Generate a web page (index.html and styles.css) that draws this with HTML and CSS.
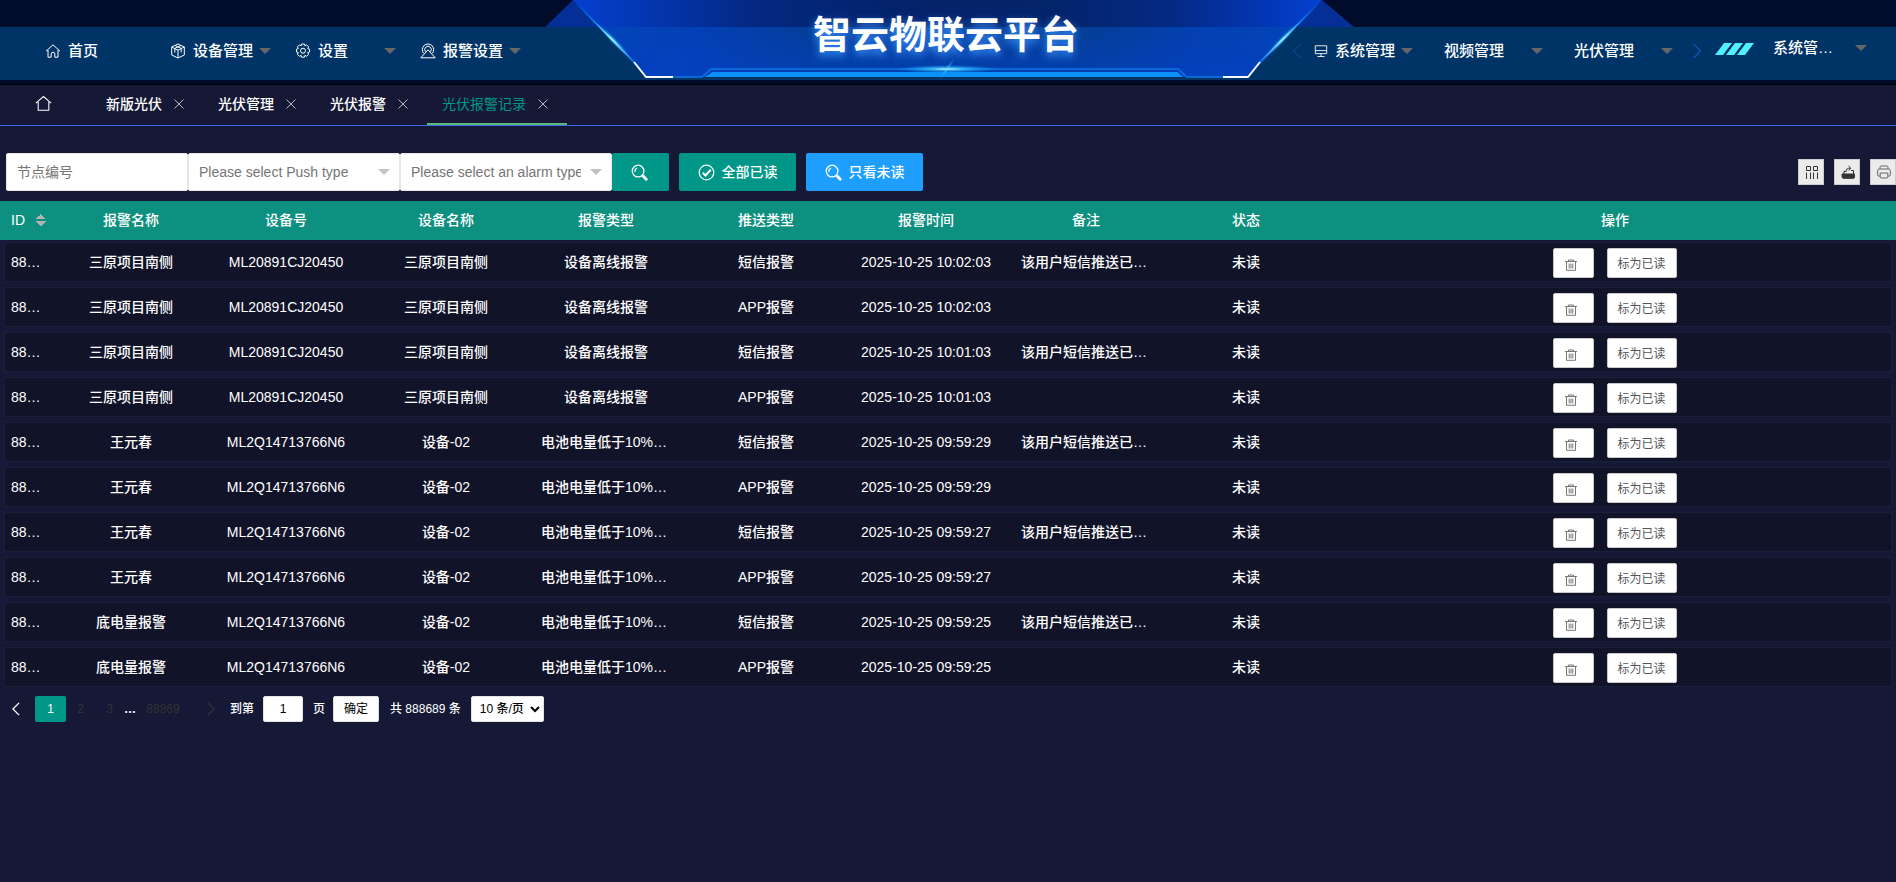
FILE: index.html
```html
<!DOCTYPE html>
<html lang="zh-CN">
<head>
<meta charset="utf-8">
<title>智云物联云平台</title>
<link rel="stylesheet" href="styles.css">
</head>
<body>
<svg class="sprite" aria-hidden="true">
  <symbol id="i-home" viewBox="0 0 16 16"><path d="M1 8.2 8 1.8l7 6.4M3 7v7.2h3.2V11a1.8 1.8 0 0 1 3.6 0v3.2H13V7"/></symbol>
  <symbol id="i-house" viewBox="0 0 16 16"><path d="M.8 7.6 8 1.4l7.2 6.2M3 6.500V14.400h10V6.500"/></symbol>
  <symbol id="i-cube" viewBox="0 0 16 16"><path d="M8 1 14.300 4v8L8 15 1.700 12V4zM1.700 4 8 7.200 14.300 4M8 7.200V15M4.500 5.500 11 2.500M5 2.500 11.500 5.500M4.800 6v3.500M11.200 6v3.500"/></symbol>
  <symbol id="i-gear" viewBox="0 0 16 16"><path d="M6.600 1h2.800l.5 1.800 1.700-.9 2 2-.9 1.700 1.800.6v2.800l-1.800.6.9 1.700-2 2-1.700-.9-.5 1.800H6.600l-.5-1.800-1.700.9-2-2 .9-1.700L1.500 9V6.200l1.800-.6-.9-1.700 2-2 1.700.9z"/><circle cx="8" cy="7.700" r="2.500"/></symbol>
  <symbol id="i-alarm" viewBox="0 0 16 16"><path d="M3.600 10.300A5.700 5.700 0 1 1 12.400 10.300M5.400 8.600A3.300 3.300 0 1 1 10.600 8.600M8 6.800.8 14.800h14.400zM5 11.200"/></symbol>
  <symbol id="i-screen" viewBox="0 0 16 16"><path d="M1.500 2h13v9h-13zM1.500 7.500h13M8 11v3M4 14.300h8"/></symbol>
  <symbol id="i-close" viewBox="0 0 16 16"><path d="m3.500 3.500 9 9m0-9-9 9"/></symbol>
  <symbol id="i-search" viewBox="0 0 18 18"><circle cx="7.500" cy="7.500" r="6.200"/><path d="M4.300 8.600A3.500 3.500 0 0 1 6.600 4.200"/><path d="m12.800 12.800 3.300 3.300" stroke-width="3" stroke-linecap="round"/></symbol>
  <symbol id="i-check" viewBox="0 0 18 18"><circle cx="9" cy="9" r="7.700"/><path d="m5 9.200 2.900 2.900 5.600-5.900" stroke-width="2.300"/></symbol>
  <symbol id="i-trash" viewBox="0 0 14 14"><path d="M1 3.500h12M4.500 3v-1h5v1M2.500 3.500v8.800h9V3.500M5.200 5.500v5M7 5.500v5M8.800 5.500v5"/></symbol>
  <symbol id="i-cols" viewBox="0 0 14 14"><path d="M1.500 1.500h4v4h-4zM8.500 1.500h4v4h-4zM1.500 7.500V14M5.500 7.500V14M8.500 7.500V14M12.500 7.500V14"/></symbol>
  <symbol id="i-export" viewBox="0 0 14 14"><path d="M1 9h12.500v3.300a1 1 0 0 1-1 1H2.200a1 1 0 0 1-1-1z" fill="currentColor"/><path d="M3 9V6.500h2M5 7c0-3 1.500-3.800 4-3.800M7.500 1l2.400 2.200-2.400 2.300M12.500 9V5.500H10"/></symbol>
  <symbol id="i-print" viewBox="0 0 14 14"><path d="M3 4V2.200A1.200 1.200 0 0 1 4.200 1h5.600A1.200 1.200 0 0 1 11 2.200V4M3 11H1.500a.8.800 0 0 1-.8-.8V5.500A1.500 1.500 0 0 1 2.200 4h9.600a1.500 1.500 0 0 1 1.500 1.500v4.700a.8.800 0 0 1-.8.800H11M3.200 8h7.600v4a1 1 0 0 1-1 1H4.200a1 1 0 0 1-1-1z"/></symbol>
  <symbol id="i-left" viewBox="0 0 10 16"><path d="M8.500 1 1.500 8l7 7"/></symbol>
  <symbol id="i-right" viewBox="0 0 10 16"><path d="m1.500 1 7 7-7 7"/></symbol>
</svg>

<header class="header">
  <div class="bar">
    <nav class="nav nav-main">
      <a class="nav-item" href="#"><svg class="icon"><use href="#i-home"/></svg>首页</a>
      <a class="nav-item" href="#"><svg class="icon"><use href="#i-cube"/></svg>设备管理<span class="caret"></span></a>
      <a class="nav-item" href="#"><svg class="icon"><use href="#i-gear"/></svg>设置<span class="caret"></span></a>
      <a class="nav-item" href="#"><svg class="icon"><use href="#i-alarm"/></svg>报警设置<span class="caret"></span></a>
    </nav>
    <nav class="nav nav-side">
      <button class="scroll dim" aria-label="向左"><svg><use href="#i-left"/></svg></button>
      <a class="nav-item" href="#"><svg class="icon small"><use href="#i-screen"/></svg>系统管理<span class="caret"></span></a>
      <a class="nav-item" href="#">视频管理<span class="caret"></span></a>
      <a class="nav-item" href="#">光伏管理<span class="caret"></span></a>
      <button class="scroll" aria-label="向右"><svg><use href="#i-right"/></svg></button>
      <svg class="stripes" viewBox="0 0 40 12"><path d="M9 0h8L8 12H0zM20 0h8l-9 12h-8zM31 0h8l-9 12h-8z"/></svg>
      <a class="user" href="#">系统管…<span class="caret"></span></a>
    </nav>
  </div>
  <svg class="banner" viewBox="0 0 820 85" aria-hidden="true">
    <defs>
      <linearGradient id="g-top" x1="0" x2="1" y1="0" y2="0">
        <stop offset="0" stop-color="#0540d0"/><stop offset=".1" stop-color="#0336b0"/><stop offset=".25" stop-color="#042880"/><stop offset=".45" stop-color="#04226a"/><stop offset=".65" stop-color="#04246c"/><stop offset=".8" stop-color="#042a84"/><stop offset=".92" stop-color="#0336b4"/><stop offset="1" stop-color="#0540d0"/>
      </linearGradient>
      <linearGradient id="g-low" x1="0" x2="1" y1="0" y2="0">
        <stop offset="0" stop-color="#0344b8"/><stop offset=".15" stop-color="#0440b4"/><stop offset=".3" stop-color="#043e98"/><stop offset=".7" stop-color="#043e96"/><stop offset=".85" stop-color="#0440b0"/><stop offset="1" stop-color="#0344b8"/>
      </linearGradient>
      <linearGradient id="g-fade" x1="0" x2="0" y1="0" y2="1">
        <stop offset="0" stop-color="#0440c8" stop-opacity="0"/><stop offset="1" stop-color="#0440c8" stop-opacity=".5"/>
      </linearGradient>
      <linearGradient id="g-edge" x1="0" x2="0" y1="0" y2="1">
        <stop offset="0" stop-color="#0a60e8" stop-opacity="0"/><stop offset=".35" stop-color="#0a8cf4"/><stop offset=".62" stop-color="#a8f4ff"/><stop offset="1" stop-color="#087ce8"/>
      </linearGradient>
      <radialGradient id="g-glow"><stop offset="0" stop-color="#d8fcff"/><stop offset=".3" stop-color="#3cc8ff" stop-opacity=".8"/><stop offset="1" stop-color="#10a0ff" stop-opacity="0"/></radialGradient>
    </defs>
    <path d="M35 0 7 27h56zM784 0l32 27h-60z" fill="#052f96"/>
    <path d="M35 0h749l-25 27H61z" fill="url(#g-top)"/>
    <path d="M61 27h698l-49 50H108z" fill="url(#g-low)"/>
    <path d="M61 27h698l-49 50H108z" fill="url(#g-fade)"/>
    <ellipse cx="76" cy="41" rx="24" ry="3" transform="rotate(46 76 41)" fill="url(#g-glow)"/>
    <ellipse cx="744" cy="40" rx="24" ry="3" transform="rotate(-46 744 40)" fill="url(#g-glow)"/>
    <path d="M35 0 96 62M784 0l-62 62" fill="none" stroke="url(#g-edge)" stroke-width="1.500"/>
    <path d="M135 77h29l9-8h467l9 8h36" fill="none" stroke="#0878e8" stroke-width="1.400"/>
    <path d="m167 77 8-5h464l6 5z" fill="#0890ff"/>
    <path d="m96 62 12 15h27M722 62l-12 15h-25" fill="none" stroke="#f4f8ff" stroke-width="2"/>
    <ellipse cx="409" cy="69" rx="52" ry="4" fill="url(#g-glow)"/>
    <ellipse cx="409" cy="69" rx="14" ry="2" transform="rotate(-55 409 69)" fill="url(#g-glow)" opacity=".6"/>
  </svg>
  <h1 class="title">智云物联云平台</h1>
</header>

<nav class="tabs">
  <a class="tab-home" href="#" aria-label="首页"><svg class="icon"><use href="#i-house"/></svg></a>
  <a class="tab" href="#">新版光伏<svg class="icon"><use href="#i-close"/></svg></a>
  <a class="tab" href="#">光伏管理<svg class="icon"><use href="#i-close"/></svg></a>
  <a class="tab" href="#">光伏报警<svg class="icon"><use href="#i-close"/></svg></a>
  <a class="tab active" href="#">光伏报警记录<svg class="icon"><use href="#i-close"/></svg></a>
</nav>

<main>
  <form class="toolbar">
    <input class="field node" type="text" placeholder="节点编号" aria-label="节点编号">
    <span class="pick"><select class="field" aria-label="推送类型"><option>Please select Push type</option></select><span class="caret"></span></span>
    <span class="pick"><select class="field" aria-label="报警类型"><option>Please select an alarm type</option></select><span class="caret"></span></span>
    <button class="btn find" type="button" aria-label="搜索"><svg class="icon"><use href="#i-search"/></svg></button>
    <button class="btn" type="button"><svg class="icon"><use href="#i-check"/></svg>全部已读</button>
    <button class="btn blue" type="button"><svg class="icon"><use href="#i-search"/></svg>只看未读</button>
    <span class="tools">
      <button class="tool" type="button" aria-label="筛选列"><svg><use href="#i-cols"/></svg></button>
      <button class="tool" type="button" aria-label="导出"><svg><use href="#i-export"/></svg></button>
      <button class="tool light" type="button" aria-label="打印"><svg><use href="#i-print"/></svg></button>
    </span>
  </form>

  <table class="grid">
    <thead>
      <tr><th class="id">ID<span class="sort"></span></th><th>报警名称</th><th>设备号</th><th>设备名称</th><th>报警类型</th><th>推送类型</th><th>报警时间</th><th>备注</th><th>状态</th><th class="ops">操作</th></tr>
    </thead>
    <tbody id="rows"></tbody>
  </table>

  <div class="pager">
    <button class="arrow" aria-label="上一页"><svg><use href="#i-left"/></svg></button>
    <a class="page current" href="#">1</a>
    <a class="page" href="#">2</a>
    <a class="page" href="#">3</a>
    <span class="dots">…</span>
    <a class="page last" href="#">88869</a>
    <button class="arrow next" aria-label="下一页"><svg><use href="#i-right"/></svg></button>
    <label class="jump">到第<input type="text" value="1">页</label>
    <button class="ok">确定</button>
    <span class="total">共 888689 条</span>
    <select class="limit" aria-label="每页条数"><option>10 条/页</option></select>
  </div>
</main>
<script src="app.js"></script>
</body>
</html>
```

FILE: styles.css
```css
* { box-sizing: border-box; }

body {
  margin: 0;
  min-height: 100vh;
  background: #151936;
  color: #fff;
  font: 500 14px/20px "Liberation Sans", "Noto Sans CJK SC", sans-serif;
  overflow-x: hidden;
}

a { color: inherit; text-decoration: none; }
button, input, select { font: inherit; margin: 0; }
button { cursor: pointer; }
svg { fill: none; stroke: currentColor; }
.sprite { display: none; }
.icon { width: 16px; height: 16px; flex: none; }

.caret {
  border: 6px solid transparent;
  border-top-color: #666;
  border-bottom: 0;
  flex: none;
}

/* header */
.header {
  position: relative;
  padding: 27px 0 4px;
  background: #000c2a;
  border-bottom: 1px solid #000;
}
.bar {
  display: flex;
  justify-content: space-between;
  height: 53px;
  padding: 0 29px 6px 33px;
  background: #003466;
}
.nav { display: flex; align-items: center; font-size: 15px; position: relative; z-index: 1; }
.nav-item { display: flex; align-items: center; width: 125px; padding: 0 12px; white-space: nowrap; }
.nav-item .icon { margin-right: 7px; }
.nav-item .small { width: 14px; height: 14px; }
.nav-item .caret, .user .caret { margin-left: auto; }
.nav-side .nav-item { width: 130px; padding-right: 19px; }
.scroll { width: 10px; padding: 0; border: 0; background: none; color: #0a74ff; line-height: 0; }
.scroll svg { width: 10px; height: 16px; }
.dim { color: #0554a8; }
.stripes { width: 40px; height: 12px; margin: 0 18px 4px 13px; fill: #4ff0ff; stroke: none; }
.user { display: flex; align-items: center; width: 94px; margin-bottom: 6px; }
.banner {
  position: absolute;
  top: 0;
  left: 50%;
  width: 820px;
  height: 85px;
  margin-left: -410px;
  stroke: none;
}
.title {
  position: absolute;
  top: 4px;
  left: 0;
  right: 0;
  margin: 0;
  padding-right: 4px;
  text-align: center;
  font: 700 38px/56px "Noto Sans CJK SC", sans-serif;
  text-shadow: 0 4px 8px #3c90ff;
}

/* tabs */
.tabs { display: flex; height: 41px; border-bottom: 1px solid #3c66e8; }
.tab-home { display: flex; align-items: center; width: 91px; padding: 0 0 3px 35px; }
.tab-home .icon { width: 17px; height: 17px; }
.tab { display: flex; align-items: center; gap: 9px; padding: 0 16px 2px 15px; }
.tab .icon { color: #bbb; }
.active { border-bottom: 2px solid #5fb878; color: #009688; padding-bottom: 0; font-weight: 400; }

/* toolbar */
.toolbar { display: flex; align-items: center; height: 75px; padding: 17px 0 0 6px; }
.field {
  width: 100%;
  height: 38px;
  padding: 0 10px;
  border: 1px solid #e6e6e6;
  border-radius: 2px;
  background: #fff;
  color: #757575;
  font-weight: 400;
  appearance: none;
}
.node { width: 182px; }
.node::placeholder { color: #757575; }
.pick { position: relative; width: 212px; }
.pick .field { padding-right: 30px; }
.pick .caret { position: absolute; right: 10px; top: 16px; border-top-color: #c2c2c2; }
.btn {
  display: flex;
  align-items: center;
  justify-content: center;
  gap: 7px;
  width: 117px;
  height: 38px;
  margin-right: 10px;
  padding: 0;
  border: 0;
  border-radius: 2px;
  background: #009688;
  color: #fff;
}
.btn .icon { width: 17px; height: 17px; stroke-width: 1.3; }
.find { width: 57px; padding-right: 3px; }
.blue { background: #1e9fff; }
.tools { display: flex; gap: 10px; margin-left: auto; }
.tool {
  width: 26px;
  height: 26px;
  padding: 4px 4px 4px 6px;
  border: 1px solid #ccc;
  background: #ebebeb;
  color: #333;
  line-height: 0;
}
.tool svg { width: 14px; height: 14px; }
.light { color: #666; }

/* alarm table */
.grid, .grid thead, .grid tbody { display: block; }
.grid tr { display: grid; grid-template-columns: 51px 150px repeat(7, 160px) 1fr; align-items: center; }
.grid thead tr { height: 39px; padding: 0 0 2px 5px; background: #0e9080; }
.grid tbody { padding-top: 2px; }
.grid tbody tr { height: 40px; margin: 0 4px 5px; border: 1px solid #1b1f3a; background: #111329; }
th, td { padding: 0; font-weight: 500; text-align: center; white-space: nowrap; }
td:first-child { padding-left: 6px; text-align: left; }
.id { display: flex; align-items: center; gap: 11px; padding-left: 6px; }
.sort {
  width: 10px;
  height: 12px;
  background:
    conic-gradient(from 135deg at 50% 0, #b2b2b2 25%, transparent 0) top / 10px 5px no-repeat,
    conic-gradient(from -45deg at 50% 100%, #b2b2b2 25%, transparent 0) bottom / 10px 5px no-repeat;
}
.ops { padding-left: 8px; }
td .remark { display: inline-block; width: 130px; text-align: left; }
td.ops { display: flex; justify-content: center; gap: 13px; padding: 2px 0 0 12px; }
.mini {
  width: 70px;
  height: 30px;
  padding: 2px 0 0;
  border: 1px solid #c9c9c9;
  border-radius: 2px;
  background: #fff;
  color: #555;
  font-size: 12px;
  font-weight: 400;
}
.del { width: 41px; padding: 3px 4px 0 0; color: #777; line-height: 0; }
.del svg { width: 14px; height: 14px; }

/* pagination */
.pager { display: flex; align-items: center; height: 26px; margin-top: 9px; padding-left: 11px; font-size: 12px; }
.arrow { width: 24px; padding: 0; border: 0; background: none; color: #fff; line-height: 0; text-align: left; }
.arrow svg { width: 10px; height: 14px; stroke-width: 1.5; }
.page { width: 29px; text-align: center; line-height: 26px; color: #333; }
.current { width: 31px; border-radius: 2px; background: #009688; color: #fff; }
.dots { width: 12px; margin-right: 10px; font-weight: 700; }
.last { width: 34px; margin-right: 26px; }
.next { color: #333; }
.jump { display: flex; align-items: center; }
.jump input { width: 40px; height: 26px; margin: 0 10px 0 9px; padding: 0; border: 1px solid #e2e2e2; border-radius: 2px; text-align: center; }
.ok { width: 46px; height: 26px; margin: 0 11px 0 8px; padding: 0; border: 1px solid #e2e2e2; border-radius: 2px; background: #fff; color: #000; font-weight: 400; }
.limit { width: 73px; height: 26px; margin-left: 10px; padding: 0 0 0 4px; border: 1px solid #e2e2e2; border-radius: 2px; background: #fff; color: #000; }
```

FILE: app.js
```js
const sms = "该用户短信推送已…";
const sites = [
  ["三原项目南侧", "ML20891CJ20450", "三原项目南侧", "设备离线报警", "10:02:03"],
  ["三原项目南侧", "ML20891CJ20450", "三原项目南侧", "设备离线报警", "10:01:03"],
  ["王元春", "ML2Q14713766N6", "设备-02", "电池电量低于10%…", "09:59:29"],
  ["王元春", "ML2Q14713766N6", "设备-02", "电池电量低于10%…", "09:59:27"],
  ["底电量报警", "ML2Q14713766N6", "设备-02", "电池电量低于10%…", "09:59:25"]
];
const html = sites.flatMap(([name, no, device, type, time]) =>
  [["短信报警", sms], ["APP报警", ""]].map(([push, remark]) => `<tr>
    <td>88…</td><td>${name}</td><td>${no}</td><td>${device}</td>
    <td><span class="${type.endsWith("…") ? "remark" : ""}">${type}</span></td>
    <td>${push}</td><td>2025-10-25 ${time}</td>
    <td><span class="remark">${remark}</span></td><td>未读</td>
    <td class="ops"><button class="mini del" aria-label="删除"><svg><use href="#i-trash"/></svg></button><button class="mini">标为已读</button></td>
  </tr>`));
document.getElementById("rows").innerHTML = html.join("");
```
